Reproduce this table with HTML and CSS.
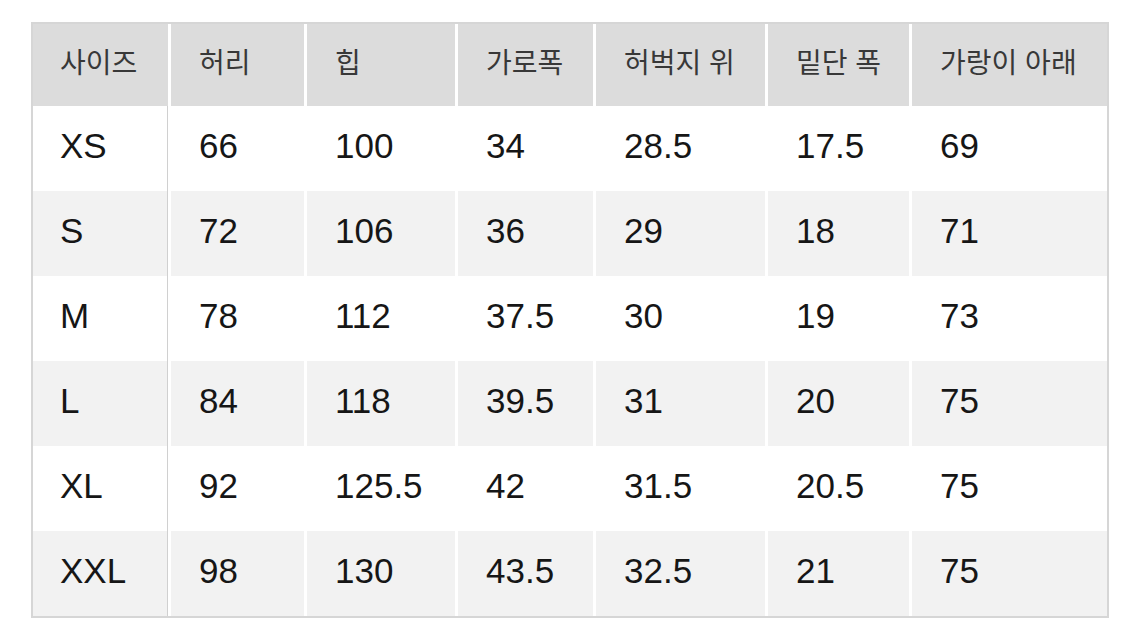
FILE: index.html
```html
<!DOCTYPE html>
<html lang="ko">
<head>
<meta charset="utf-8">
<title>사이즈표</title>
<link rel="stylesheet" href="styles.css">
</head>
<body>
<table class="size-table">
  <colgroup>
    <col class="c1"><col class="c2"><col class="c3"><col class="c4"><col class="c5"><col class="c6"><col class="c7">
  </colgroup>
  <thead>
    <tr class="head">
      <th>사이즈</th><th>허리</th><th>힙</th><th>가로폭</th><th>허벅지 위</th><th>밑단 폭</th><th>가랑이 아래</th>
    </tr>
  </thead>
  <tbody>
    <tr class="odd"><td>XS</td><td>66</td><td>100</td><td>34</td><td>28.5</td><td>17.5</td><td>69</td></tr>
    <tr class="even"><td>S</td><td>72</td><td>106</td><td>36</td><td>29</td><td>18</td><td>71</td></tr>
    <tr class="odd"><td>M</td><td>78</td><td>112</td><td>37.5</td><td>30</td><td>19</td><td>73</td></tr>
    <tr class="even"><td>L</td><td>84</td><td>118</td><td>39.5</td><td>31</td><td>20</td><td>75</td></tr>
    <tr class="odd"><td>XL</td><td>92</td><td>125.5</td><td>42</td><td>31.5</td><td>20.5</td><td>75</td></tr>
    <tr class="even"><td>XXL</td><td>98</td><td>130</td><td>43.5</td><td>32.5</td><td>21</td><td>75</td></tr>
  </tbody>
</table>
</body>
</html>
```
FILE: styles.css
```css
html, body {
  margin: 0;
  padding: 0;
  background: #ffffff;
}

body {
  padding: 22px 0 0 31px;
  font-family: "Liberation Sans", "Noto Sans CJK KR", sans-serif;
  color: #151515;
}

.size-table {
  width: 1078px;
  border-collapse: separate;
  border-spacing: 0;
  border: 2px solid #d6d6d6;
  table-layout: fixed;
}

.c1 { width: 135px; }
.c2 { width: 136px; }
.c3 { width: 151px; }
.c4 { width: 138px; }
.c5 { width: 172px; }
.c6 { width: 144px; }
.c7 { width: 198px; }

.size-table th,
.size-table td {
  padding: 0 0 0 28px;
  text-align: left;
  vertical-align: middle;
  border-left: 3px solid #ffffff;
  white-space: nowrap;
  box-sizing: border-box;
}

.size-table th:first-child,
.size-table td:first-child {
  border-left: 0;
  padding-left: 27px;
  border-right: 1px solid #d0d0d0;
}

.head th {
  height: 82px;
  padding-bottom: 8px;
  background: #dcdcdc;
  font-family: "Noto Sans CJK KR", "Liberation Sans", sans-serif;
  font-weight: 400;
  font-size: 28px;
  color: #383838;
}

.head th:first-child {
  border-right-color: #dcdcdc;
}

.size-table td {
  height: 85px;
  padding-bottom: 6px;
  font-size: 35px;
  font-weight: 400;
  color: #161616;
}

.odd td { background: #ffffff; }
.even td { background: #f2f2f2; }
```
